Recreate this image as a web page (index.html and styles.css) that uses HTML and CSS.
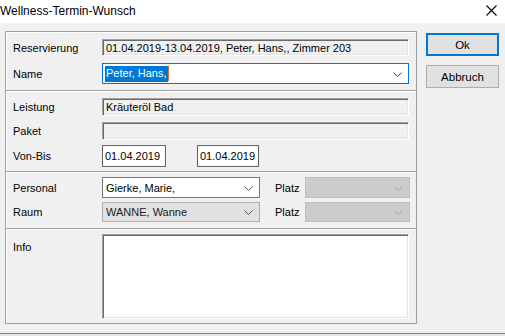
FILE: index.html
```html
<!DOCTYPE html>
<html lang="de">
<head>
<meta charset="utf-8">
<title>Wellness-Termin-Wunsch</title>
<link rel="stylesheet" href="styles.css">
</head>
<body>
<div class="window">
  <div class="titlebar">
    <span class="title">Wellness-Termin-Wunsch</span>
    <svg class="close" width="11" height="11" viewBox="0 0 11 11"><path d="M0.5 0.5 L10.5 10.5 M10.5 0.5 L0.5 10.5" stroke="#000" stroke-width="1.1" fill="none"/></svg>
  </div>
  <div class="client">
    <div class="group">
      <div class="section s1">
        <div class="row r17">
          <span class="label">Reservierung</span>
          <div class="field sunken">01.04.2019-13.04.2019, Peter, Hans,, Zimmer 203</div>
        </div>
        <div class="row r21">
          <span class="label">Name</span>
          <div class="combo focus"><span class="sel">Peter, Hans,</span><span class="caret"></span>
            <svg class="chev" width="9" height="5" viewBox="0 0 9 5"><path d="M0.5 0.5 L4.5 4.5 L8.5 0.5" stroke="#444" fill="none"/></svg>
          </div>
        </div>
      </div>
      <div class="section s2">
        <div class="row r18">
          <span class="label">Leistung</span>
          <div class="field sunken">Kräuteröl Bad</div>
        </div>
        <div class="row r18">
          <span class="label">Paket</span>
          <div class="field sunken"></div>
        </div>
        <div class="row r22">
          <span class="label">Von-Bis</span>
          <div class="dates">
            <div class="date d1">01.04.2019</div>
            <div class="date d2">01.04.2019</div>
          </div>
        </div>
      </div>
      <div class="section s3">
        <div class="row r21">
          <span class="label">Personal</span>
          <div class="split">
            <div class="combo normal">Gierke, Marie,
              <svg class="chev" width="9" height="5" viewBox="0 0 9 5"><path d="M0.5 0.5 L4.5 4.5 L8.5 0.5" stroke="#555" fill="none"/></svg>
            </div>
            <span class="plabel">Platz</span>
            <div class="combo disabled">
              <svg class="chev" width="9" height="5" viewBox="0 0 9 5"><path d="M0.5 0.5 L4.5 4.5 L8.5 0.5" stroke="#a8a8a8" fill="none"/></svg>
            </div>
          </div>
        </div>
        <div class="row r20">
          <span class="label">Raum</span>
          <div class="split">
            <div class="combo grey">WANNE, Wanne
              <svg class="chev" width="9" height="5" viewBox="0 0 9 5"><path d="M0.5 0.5 L4.5 4.5 L8.5 0.5" stroke="#555" fill="none"/></svg>
            </div>
            <span class="plabel">Platz</span>
            <div class="combo disabled">
              <svg class="chev" width="9" height="5" viewBox="0 0 9 5"><path d="M0.5 0.5 L4.5 4.5 L8.5 0.5" stroke="#a8a8a8" fill="none"/></svg>
            </div>
          </div>
        </div>
      </div>
      <div class="section s4">
        <div class="row rinfo">
          <span class="label top">Info</span>
          <div class="field sunken white"></div>
        </div>
      </div>
    </div>
    <div class="buttons">
      <div class="btn default">Ok</div>
      <div class="btn">Abbruch</div>
    </div>
  </div>
  <div class="bottom"></div>
</div>
</body>
</html>
```

FILE: styles.css
```css
* { box-sizing: border-box; }
html, body { margin: 0; padding: 0; }
body {
  width: 505px;
  height: 336px;
  overflow: hidden;
  background: #f0f0f0;
  font-family: "Liberation Sans", Arial, sans-serif;
  font-size: 11px;
  color: #000;
}
.window { width: 505px; height: 336px; display: flex; flex-direction: column; }
.titlebar {
  height: 23px;
  background: #fff;
  display: flex;
  align-items: center;
  justify-content: space-between;
  padding: 0 8px 0 0;
}
.title { font-size: 12px; margin-left: 0; padding-top: 0; margin-top: -2px; color: #000; }
.close { margin-right: 0; margin-top: -2px; }
.client {
  height: 310px;
  display: flex;
  padding: 8px 0 0 5px;
}
.group {
  width: 412px;
  height: 293px;
  border: 1px solid #a0a0a0;
  box-shadow: inset 1px 1px 0 #fff;
  display: flex;
  flex-direction: column;
}
.section { display: flex; flex-direction: column; padding: 0 7px 0 6px; }
.section + .section { border-top: 1px solid #a0a0a0; box-shadow: inset 0 1px 0 #fff; }
.s1 { height: 58px; padding-top: 7px; gap: 7px; }
.s2 { height: 81px; padding-top: 7px; gap: 6px; }
.s2 .r22 { margin-top: -1px; }
.s3 { height: 57px; padding-top: 5px; gap: 4px; }
.s4 { flex: 1; padding-top: 5px; }
.row { display: flex; align-items: center; }
.r17 { height: 17px; }
.r18 { height: 18px; }
.r20 { height: 20px; }
.r21 { height: 21px; }
.r22 { height: 22px; }
.rinfo { height: 85px; align-items: flex-start; }
.label { width: 90px; flex: none; padding-left: 1px; }
.label.top { padding-top: 7px; }
.field {
  width: 307px;
  height: 100%;
  padding: 0 3px;
  display: flex;
  align-items: center;
  white-space: nowrap;
  overflow: hidden;
}
.sunken {
  background: #f0f0f0;
  border-top: 1px solid #a0a0a0;
  border-left: 1px solid #a0a0a0;
  border-right: 1px solid #fff;
  border-bottom: 1px solid #fff;
  box-shadow: inset 1px 1px 0 #696969, inset -1px -1px 0 #e3e3e3;
}
.white { background: #fff; }
.combo {
  position: relative;
  height: 100%;
  display: flex;
  align-items: center;
  padding: 0 3px;
  white-space: nowrap;
}
.combo .chev { position: absolute; right: 6px; top: 50%; margin-top: -2px; }
.combo.focus { width: 307px; background: #fff; border: 1px solid #0078d7; padding-left: 2px; }
.sel { background: #0078d7; color: #fff; padding: 1px 1px 2px 1px; line-height: 13px; }
.caret { width: 1px; height: 15px; background: #e07020; }
.split { display: flex; align-items: center; height: 100%; }
.combo.normal { width: 158px; background: #fff; border: 1px solid #7a7a7a; }
.combo.grey { width: 158px; background: #e1e1e1; border: 1px solid #adadad; color: #222; }
.combo.disabled { width: 105px; background: #cccccc; border: 1px solid #bfbfbf; }
.r20 .combo.disabled { height: 20px; }
.plabel { width: 30px; margin-left: 15px; }
.dates { display: flex; gap: 31px; height: 100%; }
.date {
  height: 100%;
  background: #fff;
  border: 1px solid #646464;
  display: flex;
  align-items: center;
  padding: 0 2px;
}
.d1 { width: 64px; }
.d2 { width: 62px; }
.buttons {
  margin-left: 9px;
  padding-top: 2px;
  display: flex;
  flex-direction: column;
  gap: 9px;
}
.btn {
  width: 73px;
  height: 23px;
  background: #e1e1e1;
  border: 1px solid #adadad;
  display: flex;
  align-items: center;
  justify-content: center;
  font-size: 11.5px;
}
.btn.default { border: 2px solid #0078d7; }
.bottom {
  flex: 1;
  border-top: 1px solid #808080;
  background: #e6e6e6;
}
```
